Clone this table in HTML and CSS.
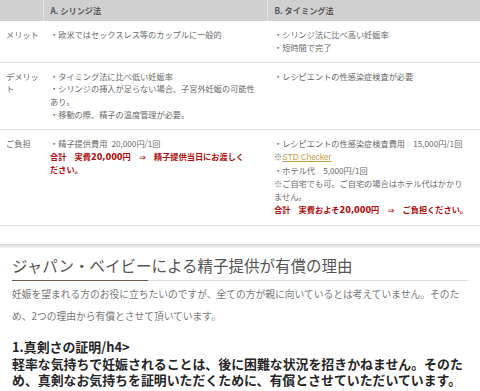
FILE: index.html
```html
<!DOCTYPE html>
<html lang="ja">
<head>
<meta charset="utf-8">
<title>精子提供</title>
<link rel="stylesheet" href="styles.css">
</head>
<body>
<div class="card">
  <table class="compare">
    <colgroup><col class="c-lab"><col class="c-a"><col class="c-b"></colgroup>
    <thead>
      <tr><th class="lab"></th><th class="ca">A. シリンジ法</th><th class="cb">B. タイミング法</th></tr>
    </thead>
    <tbody>
      <tr>
        <td class="lab">メリット</td>
        <td class="ca">・欧米ではセックスレス等のカップルに一般的</td>
        <td class="cb">・シリンジ法に比べ高い妊娠率<br>・短時間で完了</td>
      </tr>
      <tr>
        <td class="lab">デメリット</td>
        <td class="ca">・タイミング法に比べ低い妊娠率<br>・シリンジの挿入が足らない場合、子宮外妊娠の可能性あり。<br>・移動の際、精子の温度管理が必要。</td>
        <td class="cb">・レシピエントの性感染症検査が必要</td>
      </tr>
      <tr>
        <td class="lab">ご負担</td>
        <td class="ca">・精子提供費用&ensp;20,000円/1回<br><strong class="red">合計　実費20,000円　⇒　精子提供当日にお渡しく<br>ださい。</strong></td>
        <td class="cb">・レシピエントの性感染症検査費用　15,000円/1回<br>※<a class="link" href="#">STD Checker</a><br>・ホテル代　5,000円/1回<br>※ご自宅でも可。ご自宅の場合はホテル代はかかりません。<br><strong class="red one-line">合計　実費およそ20,000円　⇒　ご負担ください。</strong></td>
      </tr>
    </tbody>
  </table>
</div>
<div class="band"></div>
<section class="reasons">
  <h2 class="title">ジャパン・ベイビーによる精子提供が有償の理由</h2>
  <p class="lead">妊娠を望まれる方のお役に立ちたいのですが、全ての方が親に向いているとは考えていません。そのため、2つの理由から有償とさせて頂いています。</p>
  <p class="reason">1.真剣さの証明/h4&gt;<br>軽率な気持ちで妊娠されることは、後に困難な状況を招きかねません。そのため、真剣なお気持ちを証明いただくために、有償とさせていただいています。</p>
</section>
</body>
</html>
```
FILE: styles.css
```css
html, body {
  margin: 0;
  padding: 0;
  background: #fff;
}
body {
  width: 480px;
  height: 391px;
  overflow: hidden;
  font-family: "Noto Sans CJK JP", "Noto Sans", sans-serif;
}
.card {
  padding-bottom: 18px;
  background: #fff;
}
.compare {
  width: 480px;
  border-collapse: collapse;
  table-layout: fixed;
  font-size: 8.2px;
  line-height: 12.8px;
  color: #6a6a6a;
}
.c-lab { width: 43px; }
.c-a { width: 224px; }
.c-b { width: 213px; }
.compare th {
  background: #d0d0d0;
  color: #555;
  font-weight: 700;
  text-align: left;
  padding: 4px 7px;
  line-height: 13px;
  height: 13px;
}
.compare th + th {
  border-left: 1px solid #e4e4e4;
}
.compare td {
  vertical-align: top;
  padding: 7px 7px 8px;
  border-bottom: 1px solid #e6e6e6;
}
.compare .lab {
  padding-left: 6px;
  padding-right: 2px;
}
.compare .ca {
  padding-right: 9px;
}
.compare .cb {
  padding-right: 17px;
}
.red {
  color: #b00c0c;
  font-weight: 700;
  font-family: "DejaVu Sans", "Noto Sans CJK JP", sans-serif;
}
.one-line {
  white-space: nowrap;
}
.link {
  color: #c79d45;
  text-decoration: underline;
  font-family: "Liberation Sans", Arial, sans-serif;
}
.band {
  height: 4px;
  background: linear-gradient(#d6d6d6, #f6f6f6);
}
.reasons {
  padding: 7px 12px 0;
}
.title {
  position: relative;
  margin: 0;
  padding-bottom: 5px;
  font-size: 15.5px;
  line-height: 20px;
  font-weight: 400;
  color: #555;
  border-bottom: 1px solid #dcdcdc;
}
.title::after {
  content: "";
  position: absolute;
  left: 0;
  bottom: -1px;
  width: 136px;
  height: 1px;
  background: #6b5b4d;
}
.lead {
  margin: 2px 0 0;
  font-size: 9.75px;
  line-height: 22px;
  color: #777;
}
.reason {
  margin: 12.5px 0 0;
  font-size: 12.9px;
  line-height: 16.5px;
  font-weight: 700;
  color: #262626;
}
```
